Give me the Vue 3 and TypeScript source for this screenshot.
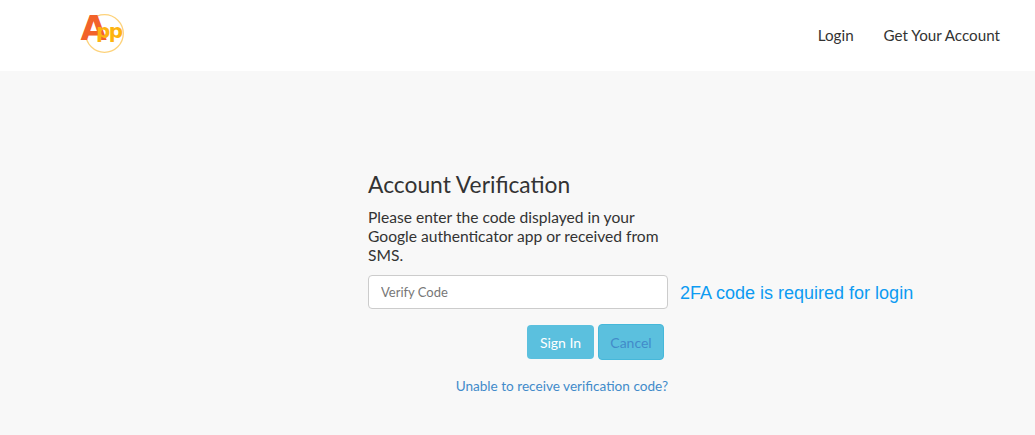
<script setup lang="ts">
const navLinks = ['Login', 'Get Your Account']
</script>

<template>
  <div class="page">
    <header class="topbar">
      <svg class="logo" width="44" height="44" viewBox="0 0 44 44">
        <circle cx="24.5" cy="21.5" r="18.8" fill="#fff" stroke="#fdd27a" stroke-width="1.3" />
        <text x="0.5" y="28" class="logo-a">A</text>
        <text x="16" y="25.5" class="logo-p">pp</text>
      </svg>
      <nav class="nav">
        <a v-for="link in navLinks" :key="link" class="nav__link">{{ link }}</a>
      </nav>
    </header>
    <main class="main">
      <form class="form" @submit.prevent>
        <h2 class="form__title">Account Verification</h2>
        <p class="form__text">Please enter the code displayed in your Google authenticator app or received from SMS.</p>
        <div class="field">
          <input class="field__input" type="text" placeholder="Verify Code" />
          <span class="field__error">2FA code is required for login</span>
        </div>
        <div class="actions">
          <button class="btn" type="submit">Sign In</button>
          <button class="btn btn--cancel" type="button">Cancel</button>
        </div>
        <a class="form__link">Unable to receive verification code?</a>
      </form>
    </main>
  </div>
</template>

<style>
html, body { margin: 0; background: #f8f8f8; }
</style>

<style scoped>
.page {
  height: 435px;
  overflow: hidden;
  font-family: Lato, "Noto Sans", sans-serif;
  color: #333;
  background: #f8f8f8;
}

.topbar {
  height: 71px;
  background: #fff;
  display: flex;
  align-items: center;
  justify-content: space-between;
  padding: 0 35px 0 80px;
  box-sizing: border-box;
}

.logo {
  align-self: flex-start;
  margin-top: 12px;
  overflow: visible;
}

.logo-a {
  font-family: "DejaVu Sans", sans-serif;
  font-size: 34px;
  font-weight: 700;
  fill: #f2622a;
}

.logo-p {
  font-family: "DejaVu Sans", sans-serif;
  font-size: 20px;
  font-weight: 700;
  letter-spacing: -1.5px;
  fill: #fdb310;
}

.nav {
  display: flex;
  gap: 30px;
  margin-top: -2px;
  font-size: 15.2px;
}

.main {
  width: 300px;
  margin-left: 368px;
  padding-top: 99px;
}

.form {
  display: flex;
  flex-direction: column;
}

.form__title {
  margin: 0;
  font-size: 22.8px;
  font-weight: 400;
  line-height: 28px;
  color: #333;
}

.form__text {
  margin: 10px 0 0;
  font-size: 15.6px;
  line-height: 19px;
  color: #333;
}

.field {
  position: relative;
  margin-top: 10px;
}

.field__input {
  display: block;
  width: 100%;
  height: 34px;
  box-sizing: border-box;
  padding: 0 12px;
  border: 1px solid #ccc;
  border-radius: 4px;
  background: #fff;
  font-family: inherit;
  font-size: 13px;
}

.field__input::placeholder {
  color: #777;
  opacity: 1;
}

.field__error {
  position: absolute;
  left: 312px;
  top: 8px;
  white-space: nowrap;
  font-family: "Liberation Sans", sans-serif;
  font-size: 18px;
  color: #0d9bf2;
}

.actions {
  display: flex;
  justify-content: flex-end;
  align-items: center;
  gap: 4px;
  margin-top: 15px;
  padding-right: 4px;
}

.btn {
  width: 67px;
  height: 34px;
  padding: 0;
  border: none;
  border-radius: 4px;
  background: #5bc0de;
  color: #fff;
  font-family: inherit;
  font-size: 14px;
}

.btn--cancel {
  width: 66px;
  height: 36px;
  border: 1px solid #46b8da;
  color: #428bca;
}

.form__link {
  margin-top: 18px;
  text-align: right;
  font-size: 13.6px;
  color: #428bca;
}
</style>
